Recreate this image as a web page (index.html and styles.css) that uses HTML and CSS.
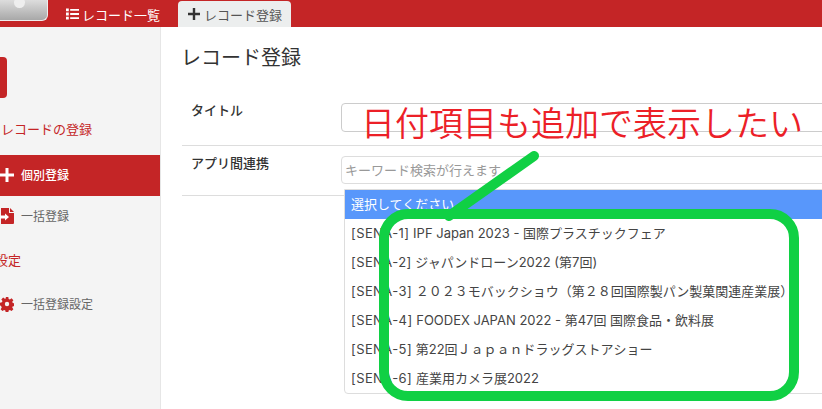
FILE: index.html
```html
<!DOCTYPE html>
<html lang="ja">
<head>
<meta charset="utf-8">
<title>レコード登録</title>
<link rel="stylesheet" href="styles.css">
</head>
<body>
<header class="topbar">
  <div class="logo"><span class="logo-dot"></span></div>
  <nav class="tabs">
    <a class="tab">
      <svg class="tab-icon" viewBox="0 0 14 12"><path fill="currentColor" d="M0 0h3v3H0zM4.500 .500H14v2H4.500zM0 4.500h3v3H0zM4.500 5H14v2H4.500zM0 9h3v3H0zM4.500 9.500H14v2H4.500z"/></svg>
      レコード一覧
    </a>
    <a class="tab tab-active">
      <svg class="tab-icon" viewBox="0 0 12 12"><path fill="currentColor" d="M4.800 0h2.400v4.800H12v2.400H7.200V12H4.800V7.200H0V4.800h4.800z"/></svg>
      レコード登録
    </a>
  </nav>
</header>
<div class="layout">
  <aside class="sidebar">
    <div class="side-button"></div>
    <div class="side-heading side-heading-first">レコードの登録</div>
    <a class="side-item side-item-active">
      <svg class="side-icon" viewBox="0 0 14 14"><path fill="currentColor" d="M5.500 0h3v5.500H14v3H8.500V14h-3V8.500H0v-3h5.500z"/></svg>
      個別登録
    </a>
    <a class="side-item">
      <svg class="side-icon side-icon-red" viewBox="0 0 14 16"><path fill="currentColor" d="M1 0h8v5h5v10a1 1 0 0 1-1 1H1zM10 0l4 4h-4z"/><path fill="#fff" d="M0 7.500h5V5.500l4 3.500-4 3.500v-2H0z"/></svg>
      一括登録
    </a>
    <div class="side-heading side-heading-second">設定</div>
    <a class="side-item side-item-last">
      <svg class="side-icon side-icon-red" viewBox="0 0 16 16"><path fill="currentColor" fill-rule="evenodd" d="M6.500 0h3l.4 2.200 1.400.6 1.900-1.300 2.100 2.100-1.300 1.900.6 1.400 2.200.4v3l-2.200.4-.6 1.400 1.300 1.900-2.100 2.100-1.900-1.300-1.400.6-.4 2.200h-3l-.4-2.200-1.400-.6-1.900 1.300-2.100-2.100 1.300-1.900-.6-1.400L0 9.500v-3l2.200-.4.600-1.400L1.500 2.800l2.100-2.100 1.900 1.300 1.400-.6zM8 5.500a2.500 2.500 0 1 0 0 5 2.500 2.500 0 0 0 0-5z"/></svg>
      一括登録設定
    </a>
  </aside>
  <main class="content">
    <h1 class="title">レコード登録</h1>
    <div class="form-row form-row-title">
      <label class="form-label">タイトル</label>
      <div class="form-field"><div class="input"></div></div>
    </div>
    <div class="form-row form-row-link">
      <label class="form-label">アプリ間連携</label>
      <div class="form-field">
        <div class="input input-search">キーワード検索が行えます</div>
        <ul class="dropdown">
          <li class="option option-selected">選択してください</li>
          <li class="option"><span class="tag">[SENA-1]</span> IPF Japan 2023 - 国際プラスチックフェア</li>
          <li class="option"><span class="tag">[SENA-2]</span> ジャパンドローン2022 (第7回)</li>
          <li class="option"><span class="tag">[SENA-3]</span> ２０２３モバックショウ（第２８回国際製パン製菓関連産業展）</li>
          <li class="option"><span class="tag">[SENA-4]</span> FOODEX JAPAN 2022 - 第47回 国際食品・飲料展</li>
          <li class="option"><span class="tag">[SENA-5]</span> 第22回Ｊａｐａｎドラッグストアショー</li>
          <li class="option"><span class="tag">[SENA-6]</span> 産業用カメラ展2022</li>
        </ul>
      </div>
    </div>
  </main>
</div>
<div class="note">日付項目も追加で表示したい</div>
<svg class="marks" viewBox="0 0 822 409" aria-hidden="true">
  <path class="mark" d="M534 156 L449 216"/>
  <rect class="mark" x="384" y="214" width="410" height="182" rx="24"/>
</svg>
</body>
</html>
```
FILE: styles.css
```css
* { box-sizing: border-box; }
html, body { margin: 0; height: 409px; overflow: hidden; }
body {
  position: relative;
  background: #fff;
  color: #333;
  font-family: Inter, "Noto Sans CJK JP", sans-serif;
  font-size: 12px;
}
.topbar {
  height: 27px;
  background: #c42526;
  display: flex;
  align-items: flex-end;
}
.logo {
  width: 48px;
  height: 21px;
  flex: none;
  align-self: flex-start;
  background: linear-gradient(#ddd, #a8a8a8);
  border: 1px solid #eee;
  border-top: 0;
  border-left: 0;
  border-radius: 0 0 6px 0;
  overflow: hidden;
}
.logo-dot {
  display: block;
  width: 11px;
  height: 11px;
  margin: -3px 0 0 14px;
  border-radius: 50%;
  background: #eee;
}
.tabs { display: flex; margin-left: 18px; gap: 18px; height: 26px; }
.tab {
  display: flex;
  align-items: center;
  gap: 3px;
  color: #fff;
  font-size: 13px;
  white-space: nowrap;
}
.tab-icon { width: 13px; height: 12px; flex: none; }
.tab-active {
  gap: 4px;
  background: #eceeee;
  color: #555;
  padding: 0 9px 0 10px;
  border-radius: 4px 4px 0 0;
}
.tab-active .tab-icon { width: 12px; color: #333; }
.layout { display: flex; height: 382px; }
.sidebar {
  width: 161px;
  flex: none;
  background: #f4f4f4;
  border-right: 1px solid #e6e6e6;
  overflow: hidden;
}
.side-button {
  width: 7px;
  height: 41px;
  margin-top: 30px;
  background: #c42526;
  border-radius: 0 4px 4px 0;
}
.side-heading { color: #c42526; white-space: nowrap; line-height: 18px; font-size: 13px; }
.side-heading-first { margin: 22px 0 0 1px; }
.side-heading-second { margin: 14px 0 0 -5px; }
.side-item {
  display: flex;
  align-items: center;
  gap: 7px;
  height: 41px;
  padding-bottom: 2px;
  color: #666;
}
.side-item-active {
  margin-top: 17px;
  background: #c42526;
  color: #fff;
  font-weight: 500;
}
.side-item-last { margin-top: 15px; }
.side-icon { width: 14px; height: 14px; flex: none; }
.side-icon-red { color: #c42526; height: 16px; }
.content { flex: 1; min-width: 0; padding: 16px 0 0 21px; overflow: hidden; }
.title { margin: 0 0 0 -1px; font-size: 20px; font-weight: 400; line-height: 30px; color: #333; white-space: nowrap; }
.form-row { display: flex; border-bottom: 1px solid #ddd; }
.form-row-title { margin-top: 16px; height: 57px; padding-top: 11px; }
.form-row-link { height: 50px; padding-top: 7px; }
.form-label { width: 159px; flex: none; padding-left: 9px; font-weight: 500; font-size: 13px; line-height: 20px; color: #333; }
.form-field { flex: 1; min-width: 0; position: relative; }
.input {
  width: 600px;
  height: 29px;
  border: 1px solid #ccc;
  border-radius: 4px;
  margin-top: 3px;
  background: #fff;
}
.input-search {
  height: 28px;
  border-color: #ddd;
  padding-left: 3px;
  color: #999;
  font-size: 13px;
  line-height: 26px;
  white-space: nowrap;
}
.dropdown {
  list-style: none;
  margin: 0 0 0 3px;
  padding: 0;
  width: 600px;
  background: #fff;
  border: 1px solid #ddd;
  border-radius: 0 0 4px 4px;
  position: absolute;
  top: 36px;
  left: 0;
}
.option {
  height: 29px;
  line-height: 28px;
  padding-left: 6px;
  font-size: 13px;
  white-space: nowrap;
  color: #444;
}
.tag { letter-spacing: .4px; }
.option-selected { background: #5897fb; color: #fff; }
.note {
  position: absolute;
  left: 361px;
  top: 102px;
  font-size: 34px;
  font-weight: 350;
  line-height: 44px;
  color: #ec2027;
  white-space: nowrap;
}
.marks { position: absolute; left: 0; top: 0; width: 822px; height: 409px; pointer-events: none; }
.mark { fill: none; stroke: #10d044; stroke-width: 10; stroke-linecap: round; }
```
